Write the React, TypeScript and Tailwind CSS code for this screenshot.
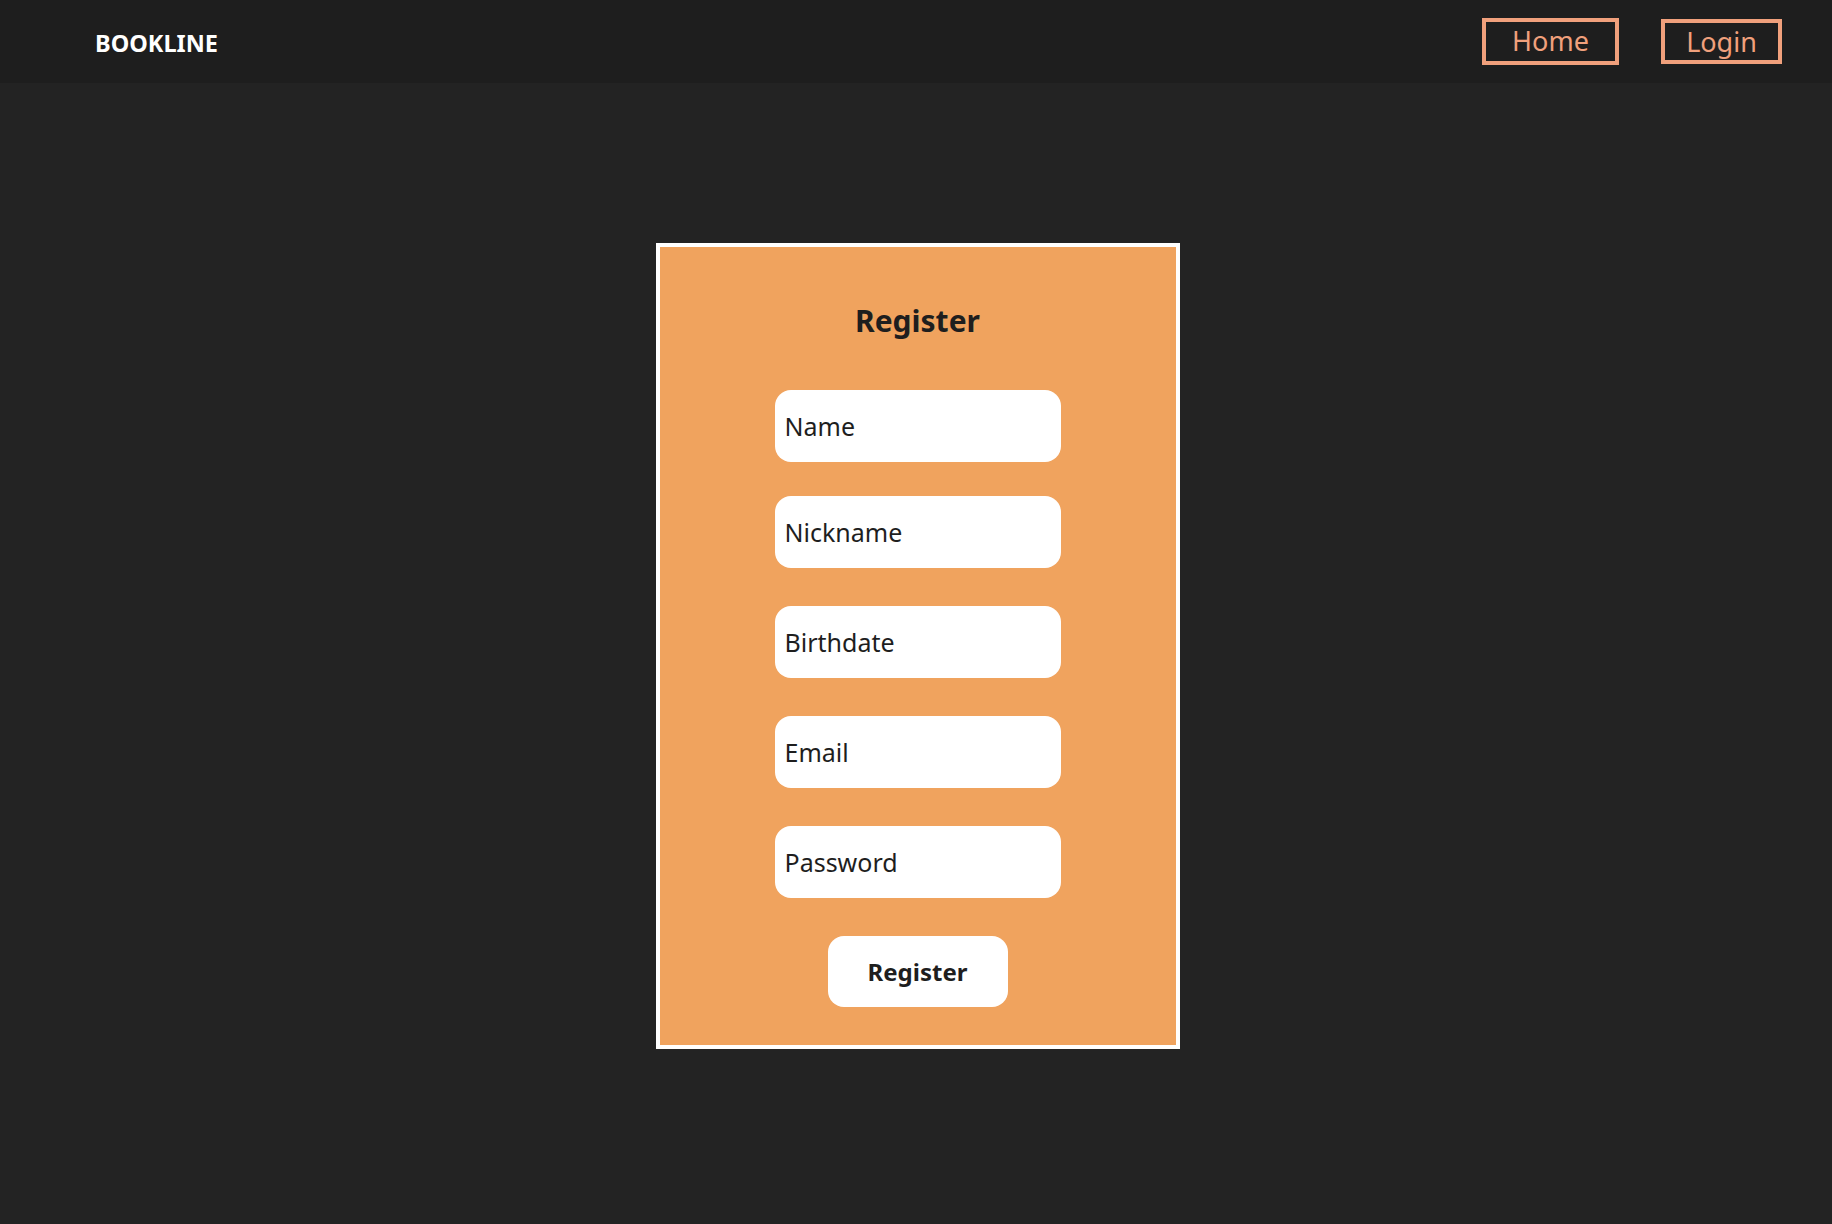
import React from "react";

const fields = ["Name", "Nickname", "Birthdate", "Email", "Password"];

export default function App() {
  return (
    <div
      className="min-h-[1224px] w-full bg-[#232323]"
      style={{ fontFamily: '"Noto Sans", "Open Sans", sans-serif' }}
    >
      <header className="h-[83px] bg-[#1e1e1e] flex items-center justify-between pl-[95px] pr-[50px]">
        <div className="pt-[4px] text-white font-bold text-[23.5px] leading-none">BOOKLINE</div>
        <nav className="flex items-center gap-[42px]">
          <button className="w-[137px] h-[47px] border-4 border-[#f0a07c] text-[#f0a07c] text-[27px] leading-none flex items-center justify-center pb-[2px]">
            Home
          </button>
          <button className="w-[121px] h-[45px] border-4 border-[#f0a07c] text-[#f0a07c] text-[27px] leading-none flex items-center justify-center">
            Login
          </button>
        </nav>
      </header>
      <main className="flex justify-center pt-[160px]">
        <div className="ml-[3px] w-[524px] border-4 border-white bg-[#f0a35e] flex flex-col items-center pt-[54px] pb-[38px]">
          <h1 className="text-[30px] leading-[40px] font-bold text-[#1e1e1e]">Register</h1>
          <div className="mt-[49px] flex flex-col items-center">
            {fields.map((f, i) => (
              <div
                key={f}
                className={
                  (i === 0 ? "" : i === 1 ? "mt-[34px] " : "mt-[38px] ") +
                  "w-[286px] h-[72px] bg-white rounded-[16px] flex items-center pl-[10px] pt-[1px] text-[25px] text-[#1e1e1e]"
                }
              >
                {f}
              </div>
            ))}
            <button className="mt-[38px] w-[180px] h-[71px] bg-white rounded-[16px] text-[24px] font-bold text-[#1e1e1e] flex items-center justify-center">
              Register
            </button>
          </div>
        </div>
      </main>
    </div>
  );
}
